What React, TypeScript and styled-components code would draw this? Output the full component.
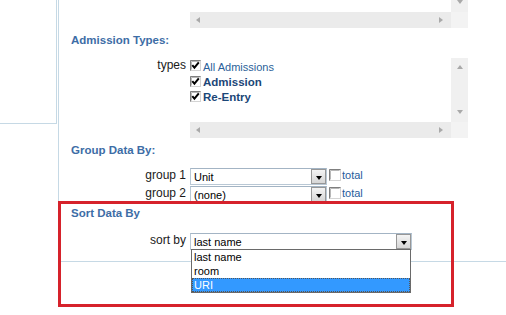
import styled, { createGlobalStyle } from "styled-components";

const GlobalStyle = createGlobalStyle`
  html, body {
    margin: 0;
    padding: 0;
    background: #fff;
  }
  body {
    font-family: "Liberation Sans", Arial, sans-serif;
    color: #1a1a1a;
  }
`;

const Page = styled.div`
  position: relative;
  display: flex;
  align-items: flex-start;
  width: 506px;
  height: 315px;
  overflow: hidden;
`;

const SideBox = styled.div`
  flex: none;
  width: 56px;
  height: 123px;
  border-right: 1px solid #c6d9e5;
  border-bottom: 1px solid #c6d9e5;
`;

const Main = styled.div`
  flex: 1;
  margin-left: 1px;
  height: 261px;
  border-left: 1px solid #c6d9e5;
  border-bottom: 1px solid #c6d9e5;
`;

const Heading = styled.div<{ $top?: number; $bottom?: number }>`
  margin: ${(p) => p.$top ?? 4}px 0 ${(p) => p.$bottom ?? 11}px 12px;
  font-size: 11.5px;
  line-height: 14px;
  font-weight: bold;
  color: #3d6da6;
`;

const FieldRow = styled.div`
  display: flex;
  align-items: flex-start;
  margin-bottom: 1px;
`;

const FieldLabel = styled.div`
  flex: none;
  width: 127px;
  margin-right: 4px;
  text-align: right;
  font-size: 12px;
  line-height: 15px;
`;

/* listbox with disabled scrollbars */

const Listbox = styled.div<{ $shift?: number }>`
  display: grid;
  grid-template-columns: 261px 17px;
  grid-template-rows: 64px 16px;
  width: 278px;
  height: 80px;
  margin-top: ${(p) => p.$shift ?? 0}px;
  background: #fff;
`;

const ListContent = styled.div`
  padding-top: 1px;
`;

const VScroll = styled.div`
  display: flex;
  flex-direction: column;
  align-items: center;
  justify-content: space-between;
  padding: 7px 0 8px;
  background: #f0f0f0;
`;

const HScroll = styled.div`
  display: flex;
  align-items: center;
  justify-content: space-between;
  padding: 0 8px 0 6px;
  background: #ebebeb;
`;

const Corner = styled.div`
  background: #f3f3f3;
`;

type Dir = "up" | "down" | "left" | "right";

const Arrow = styled.span<{ $dir: Dir }>`
  width: 0;
  height: 0;
  border-style: solid;
  border-color: transparent;
  ${({ $dir }) =>
    $dir === "up"
      ? "border-width: 0 3.5px 4px; border-bottom-color: #a9a9a9;"
      : $dir === "down"
      ? "border-width: 4px 3.5px 0; border-top-color: #a9a9a9;"
      : $dir === "left"
      ? "border-width: 3.5px 4px 3.5px 0; border-right-color: #a9a9a9;"
      : "border-width: 3.5px 0 3.5px 4px; border-left-color: #a9a9a9;"}
`;

const CheckRow = styled.div<{ $h: number }>`
  display: flex;
  align-items: flex-start;
  height: ${(p) => p.$h}px;
`;

const CheckLabel = styled.span<{ $strong?: boolean }>`
  margin-left: 2px;
  font-size: ${(p) => (p.$strong ? "11.5px" : "11px")};
  font-weight: ${(p) => (p.$strong ? "bold" : "normal")};
  line-height: ${(p) => (p.$strong ? "15px" : "16px")};
  color: ${(p) => (p.$strong ? "#1b4677" : "#2b5f99")};
  white-space: nowrap;
`;

const BoxSvg = styled.svg`
  flex: none;
  display: block;
  margin-top: 1px;
`;

const CheckBox = ({ checked, size = 11 }: { checked?: boolean; size?: number }) => (
  <BoxSvg width={size} height={size} viewBox={`0 0 ${size} ${size}`}>
    <rect x="0.5" y="0.5" width={size - 1} height={size - 1} fill="#fff" stroke="#d4d4d4" />
    <path d={`M0.5 ${size - 0.5} V0.5 H${size - 0.5}`} fill="none" stroke="#7f7f7f" />
    <path d={`M1.5 ${size - 1.5} V1.5 H${size - 1.5}`} fill="none" stroke="#b8b8b8" />
    {checked && (
      <path d="M2.3 5.2 L4.4 7.6 L8.8 2.4" fill="none" stroke="#000" strokeWidth="2" />
    )}
  </BoxSvg>
);

/* select */

const SelectWrap = styled.div<{ $w: number }>`
  position: relative;
  flex: none;
  display: flex;
  width: ${(p) => p.$w}px;
  height: 17px;
  box-sizing: border-box;
  border: 1px solid #b9c8d5;
  border-top-color: #a3b4c4;
  background: #fff;
`;

const SelectValue = styled.div`
  flex: 1;
  padding-left: 3px;
  font-size: 11px;
  line-height: 16px;
  color: #000;
  white-space: nowrap;
`;

const DropButton = styled.div`
  flex: none;
  display: flex;
  align-items: center;
  justify-content: center;
  width: 15px;
  height: 15px;
  box-sizing: border-box;
  border: 1px solid #979797;
  background: linear-gradient(#f4f4f4, #d6d6d6);
`;

const DropTriangle = styled.span`
  margin-top: 2px;
  width: 0;
  height: 0;
  border-style: solid;
  border-width: 4px 3.5px 0;
  border-color: #000 transparent transparent;
`;

const OptionList = styled.div`
  position: absolute;
  top: 15px;
  left: 0;
  right: 0;
  border: 1px solid #6a6a6a;
  background: #fff;
  z-index: 2;
`;

const Option = styled.div<{ $active?: boolean }>`
  height: 14px;
  padding-left: 2px;
  font-size: 11px;
  line-height: 14px;
  color: ${(p) => (p.$active ? "#fff" : "#000")};
  background: ${(p) => (p.$active ? "#3399ff" : "transparent")};
  outline: ${(p) => (p.$active ? "1px dotted #555" : "none")};
  outline-offset: -1px;
`;

const TotalBox = styled.div`
  display: flex;
  align-items: flex-start;
  margin-left: 2px;
`;

const TotalLabel = styled.span`
  margin-left: 1px;
  font-size: 11px;
  line-height: 15px;
  color: #1f5c9c;
`;

const Annotation = styled.div`
  position: absolute;
  left: 58px;
  top: 201px;
  width: 396px;
  height: 106px;
  box-sizing: border-box;
  border: 3px solid #d6222b;
  pointer-events: none;
  z-index: 3;
`;

const EmptyListbox = ({ shift }: { shift?: number }) => (
  <Listbox $shift={shift}>
    <ListContent />
    <VScroll>
      <Arrow $dir="up" />
      <Arrow $dir="down" />
    </VScroll>
    <HScroll>
      <Arrow $dir="left" />
      <Arrow $dir="right" />
    </HScroll>
    <Corner />
  </Listbox>
);

const admissionTypes = [
  { label: "All Admissions", strong: false, h: 16 },
  { label: "Admission", strong: true, h: 15 },
  { label: "Re-Entry", strong: true, h: 15 },
];

const groups = [
  { label: "group 1", value: "Unit" },
  { label: "group 2", value: "(none)" },
];

const sortOptions = ["last name", "room", "URI"];

export default function App() {
  return (
    <>
      <GlobalStyle />
      <Page>
        <SideBox />
        <Main>
          <FieldRow>
            <FieldLabel />
            <EmptyListbox shift={-52} />
          </FieldRow>

          <Heading $top={5}>Admission Types:</Heading>
          <FieldRow>
            <FieldLabel>types</FieldLabel>
            <Listbox>
              <ListContent>
                {admissionTypes.map((t) => (
                  <CheckRow key={t.label} $h={t.h}>
                    <CheckBox checked />
                    <CheckLabel $strong={t.strong}>{t.label}</CheckLabel>
                  </CheckRow>
                ))}
              </ListContent>
              <VScroll>
                <Arrow $dir="up" />
                <Arrow $dir="down" />
              </VScroll>
              <HScroll>
                <Arrow $dir="left" />
                <Arrow $dir="right" />
              </HScroll>
              <Corner />
            </Listbox>
          </FieldRow>

          <Heading $top={5}>Group Data By:</Heading>
          {groups.map((g) => (
            <FieldRow key={g.label}>
              <FieldLabel>{g.label}</FieldLabel>
              <SelectWrap $w={137}>
                <SelectValue>{g.value}</SelectValue>
                <DropButton>
                  <DropTriangle />
                </DropButton>
              </SelectWrap>
              <TotalBox>
                <CheckBox size={12} />
                <TotalLabel>total</TotalLabel>
              </TotalBox>
            </FieldRow>
          ))}

          <Heading $top={3} $bottom={13}>
            Sort Data By
          </Heading>
          <FieldRow>
            <FieldLabel>sort by</FieldLabel>
            <SelectWrap $w={222}>
              <SelectValue>last name</SelectValue>
              <DropButton>
                <DropTriangle />
              </DropButton>
              <OptionList>
                {sortOptions.map((o) => (
                  <Option key={o} $active={o === "URI"}>
                    {o}
                  </Option>
                ))}
              </OptionList>
            </SelectWrap>
          </FieldRow>
        </Main>
        <Annotation />
      </Page>
    </>
  );
}
